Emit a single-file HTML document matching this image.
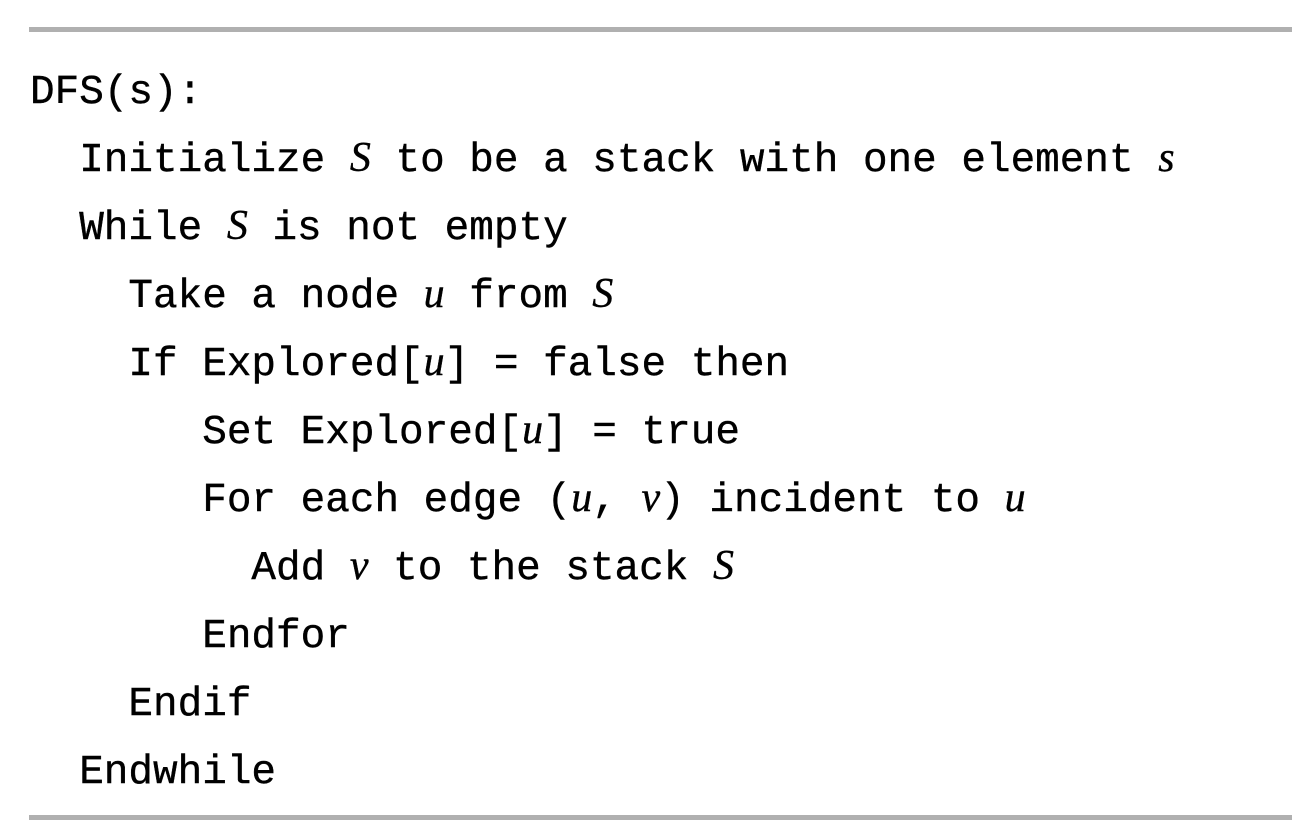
<!DOCTYPE html>
<html><head><meta charset="utf-8"><style>
html,body{margin:0;padding:0;background:#fff;width:1292px;height:840px;overflow:hidden;position:relative}
.rule{position:absolute;left:29px;right:0;height:5px;background:#b0b0b0}
.code{position:absolute;left:30px;top:59px;font-family:"Liberation Mono",monospace;font-size:41px;line-height:68px;color:#000;white-space:pre;-webkit-text-stroke:0.4px #000}
.code div{height:68px}
i{font-family:"Liberation Serif",serif;font-style:italic;font-size:42px;line-height:0}
</style></head><body>
<div class="rule" style="top:27px"></div>
<div class="code"><div>DFS(s):</div><div>  Initialize <i>S</i> to be a stack with one element <i>s</i></div><div>  While <i>S</i> is not empty</div><div>    Take a node <i>u</i> from <i>S</i></div><div>    If Explored[<i>u</i>] = false then</div><div>       Set Explored[<i>u</i>] = true</div><div>       For each edge (<i>u</i>, <i>v</i>) incident to <i>u</i></div><div>         Add <i>v</i> to the stack <i>S</i></div><div>       Endfor</div><div>    Endif</div><div>  Endwhile</div></div>
<div class="rule" style="top:815px"></div>
</body></html>
